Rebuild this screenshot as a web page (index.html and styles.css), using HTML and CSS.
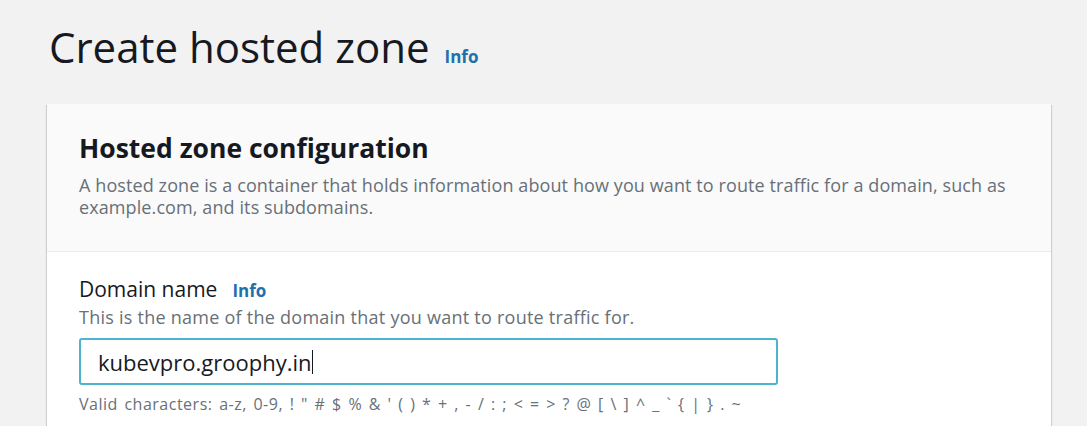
FILE: index.html
```html
<!DOCTYPE html>
<html lang="en">
<head>
<meta charset="utf-8">
<title>Create hosted zone</title>
<link rel="stylesheet" href="styles.css">
</head>
<body>
<main class="page">
  <header class="page-head">
    <h1 class="page-title">Create hosted zone</h1>
    <a class="info-link info-lg" href="#">Info</a>
  </header>
  <section class="card">
    <div class="card-head">
      <h2 class="card-title">Hosted zone configuration</h2>
      <p class="card-desc">A hosted zone is a container that holds information about how you want to route traffic for a domain, such as example.com, and its subdomains.</p>
    </div>
    <div class="card-body">
      <div class="field-label">
        <span class="label-text">Domain name</span>
        <a class="info-link info-sm" href="#">Info</a>
      </div>
      <p class="field-desc">This is the name of the domain that you want to route traffic for.</p>
      <div class="text-input"><span class="input-value">kubevpro.groophy.in</span><span class="caret"></span></div>
      <p class="field-hint">Valid characters: a-z, 0-9, ! " # $ % &amp; ' ( ) * + , - / : ; &lt; = &gt; ? @ [ \ ] ^ _ ` { | } . ~</p>
    </div>
  </section>
</main>
</body>
</html>
```

FILE: styles.css
```css
* { box-sizing: border-box; }
html, body { margin: 0; padding: 0; }
body {
  background: #f2f2f2;
  font-family: "Open Sans", "Liberation Sans", sans-serif;
  color: #16191f;
  height: 426px;
  overflow: hidden;
}
.page {
  padding: 23px 36px 0 47px;
}
.page-head {
  display: flex;
  align-items: baseline;
  gap: 15px;
  height: 48px;
}
.page-title {
  margin: 0 0 0 2px;
  font-size: 42px;
  line-height: 48px;
  font-weight: 500;
  color: #16191f;
}
.info-link {
  color: #1f70ab;
  font-weight: 700;
  text-decoration: none;
}
.info-lg { font-size: 17px; }
.info-sm { font-size: 17px; }
.card {
  margin-top: 33px;
  width: 1004px;
  background: #fff;
  box-shadow: 0 1px 1px 0 rgba(0,28,36,.22), 1px 1px 1px 0 rgba(0,28,36,.12), -1px 1px 1px 0 rgba(0,28,36,.12);
}
.card-head {
  background: #fafafa;
  border-bottom: 1px solid #eaeded;
  padding: 28px 20px 33px 32px;
}
.card-title {
  margin: 0;
  font-size: 26.5px;
  line-height: 32px;
  font-weight: 700;
  color: #16191f;
}
.card-desc {
  margin: 10px 0 0;
  font-size: 18px;
  line-height: 22px;
  font-weight: 500;
  color: #687078;
  letter-spacing: 0.1px;
}
.card-body {
  padding: 24px 32px 20px 32px;
}
.field-label {
  display: flex;
  align-items: baseline;
  gap: 15px;
  line-height: 26px;
}
.label-text {
  font-size: 21px;
  font-weight: 500;
  color: #16191f;
}
.field-desc {
  margin: 2px 0 0;
  font-size: 18px;
  line-height: 22px;
  font-weight: 500;
  color: #687078;
  letter-spacing: 0.25px;
}
.text-input {
  margin-top: 10px;
  width: 699px;
  height: 47px;
  border: 2px solid #4eb3cf;
  border-radius: 3px;
  padding: 0 16px 0 17px;
  display: flex;
  align-items: center;
  font-size: 22px;
  font-weight: 500;
  color: #16191f;
}
.caret {
  display: inline-block;
  width: 1px;
  height: 24px;
  background: #16191f;
  margin-left: 0;
}
.field-hint {
  margin: 9px 0 0;
  font-size: 16px;
  line-height: 20px;
  font-weight: 500;
  color: #687078;
  letter-spacing: 0.5px;
  word-spacing: 2px;
}
```
